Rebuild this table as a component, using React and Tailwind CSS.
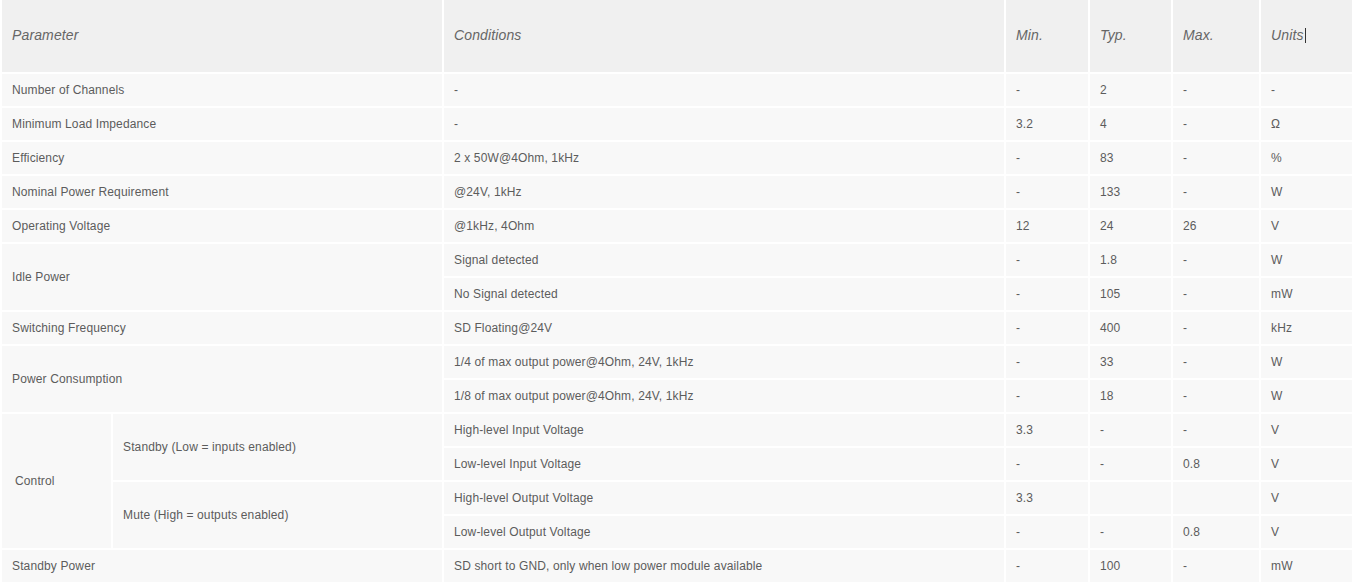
import React from "react";

const rows = [
  ["Number of Channels", "-", "-", "2", "-", "-"],
  ["Minimum Load Impedance", "-", "3.2", "4", "-", "Ω"],
  ["Efficiency", "2 x 50W@4Ohm, 1kHz", "-", "83", "-", "%"],
  ["Nominal Power Requirement", "@24V, 1kHz", "-", "133", "-", "W"],
  ["Operating Voltage", "@1kHz, 4Ohm", "12", "24", "26", "V"],
];

const Cell = ({ className = "", children }) => (
  <div className={`bg-[#f8f8f8] flex items-center pl-[10px] ${className}`}>{children}</div>
);

const Vals = ({ v }) => (
  <>
    <Cell className="col-start-3">{v[0]}</Cell>
    <Cell>{v[1]}</Cell>
    <Cell>{v[2]}</Cell>
    <Cell>{v[3]}</Cell>
    <Cell>{v[4]}</Cell>
  </>
);

function App() {
  return (
    <div className="bg-white w-[1354px] h-[584px] overflow-hidden font-['Liberation_Sans',Arial,sans-serif] text-[12px] tracking-[0.13px] text-[#5c5c5c]">
      <div className="grid grid-cols-[109px_329px_560px_82px_81px_86px_91px] grid-rows-[72px_repeat(15,32px)] gap-[2px] px-[2px] pb-[2px]">
        {/* header */}
        <div className="col-span-2 bg-[#f0f0f0] flex items-center pl-[10px] pb-px italic text-[14px] text-[#666]">Parameter</div>
        <div className="bg-[#f0f0f0] flex items-center pl-[10px] pb-px italic text-[14px] text-[#666]">Conditions</div>
        <div className="bg-[#f0f0f0] flex items-center pl-[10px] pb-px italic text-[14px] text-[#666]">Min.</div>
        <div className="bg-[#f0f0f0] flex items-center pl-[10px] pb-px italic text-[14px] text-[#666]">Typ.</div>
        <div className="bg-[#f0f0f0] flex items-center pl-[10px] pb-px italic text-[14px] text-[#666]">Max.</div>
        <div className="bg-[#f0f0f0] flex items-center pl-[10px] pb-px italic text-[14px] text-[#666]">
          Units<span className="inline-block w-px h-[15px] bg-[#333] ml-px" />
        </div>

        {rows.map((r) => (
          <React.Fragment key={r[0]}>
            <Cell className="col-span-2">{r[0]}</Cell>
            <Cell>{r[1]}</Cell>
            <Cell>{r[2]}</Cell>
            <Cell>{r[3]}</Cell>
            <Cell>{r[4]}</Cell>
            <Cell>{r[5]}</Cell>
          </React.Fragment>
        ))}

        {/* Idle Power */}
        <Cell className="col-span-2 row-span-2">Idle Power</Cell>
        <Cell>Signal detected</Cell>
        <Cell>-</Cell>
        <Cell>1.8</Cell>
        <Cell>-</Cell>
        <Cell>W</Cell>
        <Vals v={["No Signal detected", "-", "105", "-", "mW"]} />

        <Cell className="col-span-2">Switching Frequency</Cell>
        <Cell>SD Floating@24V</Cell>
        <Cell>-</Cell>
        <Cell>400</Cell>
        <Cell>-</Cell>
        <Cell>kHz</Cell>

        {/* Power Consumption */}
        <Cell className="col-span-2 row-span-2">Power Consumption</Cell>
        <Cell>1/4 of max output power@4Ohm, 24V, 1kHz</Cell>
        <Cell>-</Cell>
        <Cell>33</Cell>
        <Cell>-</Cell>
        <Cell>W</Cell>
        <Vals v={["1/8 of max output power@4Ohm, 24V, 1kHz", "-", "18", "-", "W"]} />

        {/* Control */}
        <Cell className="row-span-4 pl-[13px]">Control</Cell>
        <Cell className="row-span-2">Standby (Low = inputs enabled)</Cell>
        <Cell>High-level Input Voltage</Cell>
        <Cell>3.3</Cell>
        <Cell>-</Cell>
        <Cell>-</Cell>
        <Cell>V</Cell>
        <Vals v={["Low-level Input Voltage", "-", "-", "0.8", "V"]} />
        <Cell className="col-start-2 row-span-2">Mute (High = outputs enabled)</Cell>
        <Cell>High-level Output Voltage</Cell>
        <Cell>3.3</Cell>
        <Cell></Cell>
        <Cell></Cell>
        <Cell>V</Cell>
        <Vals v={["Low-level Output Voltage", "-", "-", "0.8", "V"]} />

        <Cell className="col-span-2">Standby Power</Cell>
        <Cell>SD short to GND, only when low power module available</Cell>
        <Cell>-</Cell>
        <Cell>100</Cell>
        <Cell>-</Cell>
        <Cell>mW</Cell>
      </div>
    </div>
  );
}

export default App;
